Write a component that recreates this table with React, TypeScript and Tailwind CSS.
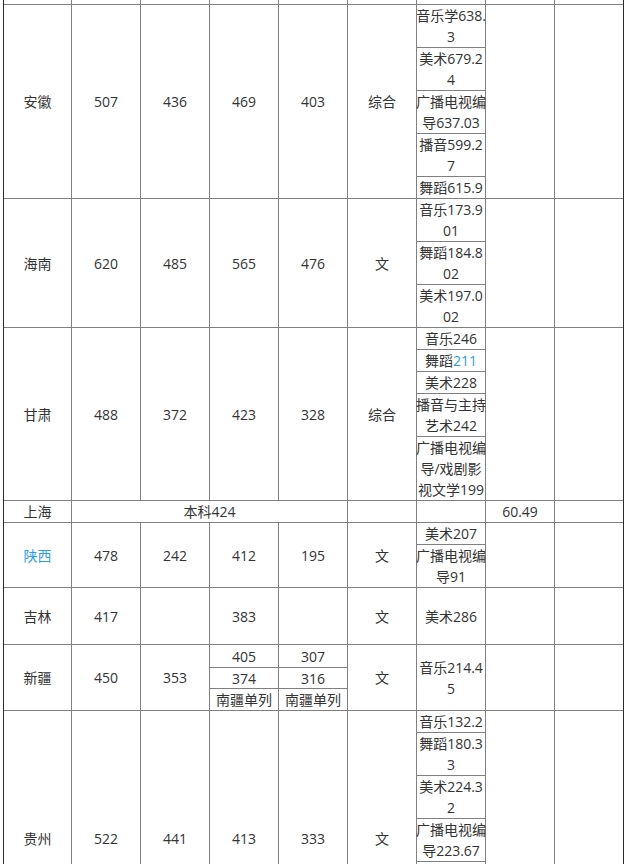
import React from "react";

const B = "border-[#808080]";

function Cell({
  w = "w-[69px]",
  last = false,
  children,
  className = "",
}: {
  w?: string;
  last?: boolean;
  children?: React.ReactNode;
  className?: string;
}) {
  return (
    <div
      className={`${w} shrink-0 flex items-center justify-center text-center ${
        last ? "" : "border-r " + B
      } ${className}`}
    >
      {children !== undefined && (
        <span className="w-[70px] shrink-0 text-center break-all">{children}</span>
      )}
    </div>
  );
}

function Sub({ items }: { items: React.ReactNode[] }) {
  return (
    <div className={`w-[69px] shrink-0 flex flex-col border-r ${B}`}>
      {items.map((it, i) => (
        <div
          key={i}
          className={`flex items-center justify-center text-center ${
            i < items.length - 1 ? "border-b " + B : ""
          }`}
        >
          <span className="w-[70px] shrink-0 text-center break-all">{it}</span>
        </div>
      ))}
    </div>
  );
}

function Row({
  children,
  className = "",
}: {
  children: React.ReactNode;
  className?: string;
}) {
  return <div className={`flex border-b ${B} ${className}`}>{children}</div>;
}

const blue = "text-[#2b9cf2]";

export default function App() {
  return (
    <div
      className="bg-white min-h-screen text-[#333] text-[14px] leading-[21px] pl-[3px]"
      style={{ fontFamily: '"Open Sans", "Noto Sans CJK SC", sans-serif' }}
    >
      <div className="w-[621px] border-l border-r border-[#2b2b2b]">
        {/* partial top row */}
        <Row className="h-[5px]">
          <Cell w="w-[68px]" />
          <Cell />
          <Cell />
          <Cell />
          <Cell />
          <Cell />
          <Cell />
          <Cell />
          <Cell w="w-[68px]" last />
        </Row>

        {/* 安徽 */}
        <Row>
          <Cell w="w-[68px]">安徽</Cell>
          <Cell>507</Cell>
          <Cell>436</Cell>
          <Cell>469</Cell>
          <Cell>403</Cell>
          <Cell>综合</Cell>
          <Sub
            items={[
              "音乐学638.3",
              "美术679.24",
              "广播电视编导637.03",
              "播音599.27",
              "舞蹈615.9",
            ]}
          />
          <Cell />
          <Cell w="w-[68px]" last />
        </Row>

        {/* 海南 */}
        <Row>
          <Cell w="w-[68px]">海南</Cell>
          <Cell>620</Cell>
          <Cell>485</Cell>
          <Cell>565</Cell>
          <Cell>476</Cell>
          <Cell>文</Cell>
          <Sub items={["音乐173.901", "舞蹈184.802", "美术197.002"]} />
          <Cell />
          <Cell w="w-[68px]" last />
        </Row>

        {/* 甘肃 */}
        <Row>
          <Cell w="w-[68px]">甘肃</Cell>
          <Cell>488</Cell>
          <Cell>372</Cell>
          <Cell>423</Cell>
          <Cell>328</Cell>
          <Cell>综合</Cell>
          <Sub
            items={[
              "音乐246",
              <span key="w">
                舞蹈<span className={blue}>211</span>
              </span>,
              "美术228",
              "播音与主持艺术242",
              "广播电视编导/戏剧影视文学199",
            ]}
          />
          <Cell />
          <Cell w="w-[68px]" last />
        </Row>

        {/* 上海 */}
        <Row>
          <Cell w="w-[68px]">上海</Cell>
          <div className={`w-[276px] shrink-0 flex items-center justify-center border-r ${B}`}>
            本科424
          </div>
          <Cell />
          <Cell />
          <Cell>60.49</Cell>
          <Cell w="w-[68px]" last />
        </Row>

        {/* 陕西 */}
        <Row>
          <Cell w="w-[68px]" className={blue}>
            陕西
          </Cell>
          <Cell>478</Cell>
          <Cell>242</Cell>
          <Cell>412</Cell>
          <Cell>195</Cell>
          <Cell>文</Cell>
          <Sub items={["美术207", "广播电视编导91"]} />
          <Cell />
          <Cell w="w-[68px]" last />
        </Row>

        {/* 吉林 */}
        <Row className="h-[57px]">
          <Cell w="w-[68px]">吉林</Cell>
          <Cell>417</Cell>
          <Cell />
          <Cell>383</Cell>
          <Cell />
          <Cell>文</Cell>
          <Cell>美术286</Cell>
          <Cell />
          <Cell w="w-[68px]" last />
        </Row>

        {/* 新疆 */}
        <Row>
          <Cell w="w-[68px]">新疆</Cell>
          <Cell>450</Cell>
          <Cell>353</Cell>
          <div className={`w-[69px] shrink-0 flex flex-col border-r ${B}`}>
            <div className={`h-[23px] flex items-center justify-center border-b ${B}`}>405</div>
            <div className={`h-[21px] flex items-center justify-center border-b ${B}`}>374</div>
            <div className="h-[21px] flex items-center justify-center">南疆单列</div>
          </div>
          <div className={`w-[69px] shrink-0 flex flex-col border-r ${B}`}>
            <div className={`h-[23px] flex items-center justify-center border-b ${B}`}>307</div>
            <div className={`h-[21px] flex items-center justify-center border-b ${B}`}>316</div>
            <div className="h-[21px] flex items-center justify-center">南疆单列</div>
          </div>
          <Cell>文</Cell>
          <Cell>音乐214.45</Cell>
          <Cell />
          <Cell w="w-[68px]" last />
        </Row>

        {/* 贵州 */}
        <Row>
          <Cell w="w-[68px]">贵州</Cell>
          <Cell>522</Cell>
          <Cell>441</Cell>
          <Cell>413</Cell>
          <Cell>333</Cell>
          <Cell>文</Cell>
          <Sub
            items={[
              "音乐132.2",
              "舞蹈180.33",
              "美术224.32",
              "广播电视编导223.67",
              <span key="f" className="block h-[104px]" />,
            ]}
          />
          <Cell />
          <Cell w="w-[68px]" last />
        </Row>
      </div>
    </div>
  );
}
